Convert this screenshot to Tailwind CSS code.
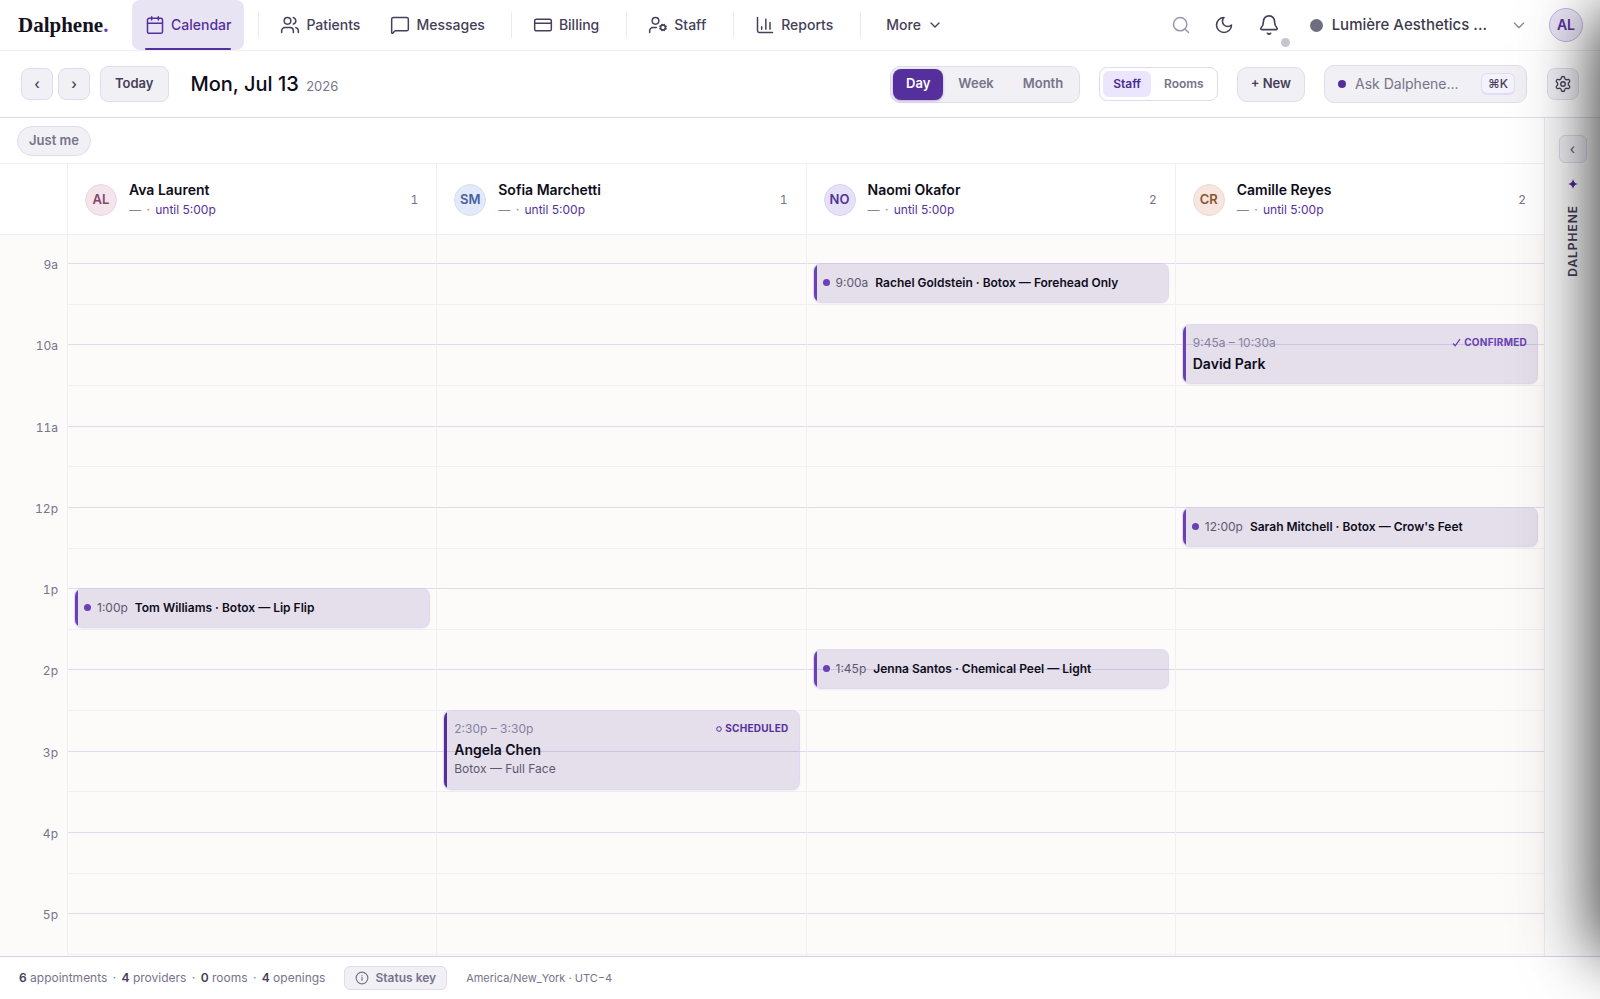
<!DOCTYPE html>
<html lang="en">
  <head>
    <meta charset="UTF-8" />
    <meta name="viewport" content="width=device-width, initial-scale=1.0" />
    <title>Dalphene - Calendar</title>
    <script src="https://cdn.jsdelivr.net/npm/@tailwindcss/browser@4"></script>
  </head>
  <body class="font-['Inter',sans-serif] text-[#0f0d1a] bg-white">
    <div class="relative h-screen flex flex-col overflow-hidden">
      <!-- Top nav -->
      <header class="flex items-center h-[51px] shrink-0 border-b border-[#f0f0f3] pl-[18px] pr-[17px] text-[#454058]">
        <a href="#" class="w-[114px] font-['Liberation_Serif',serif] font-bold text-[21px] leading-7 text-[#14121f]">Dalphene<span class="text-[#6b3fc0]">.</span></a>
        <nav class="flex items-center h-full text-sm font-medium">
          <a href="#" class="relative flex items-center gap-[6px] h-full px-[13px] rounded-lg bg-[#e9e4f3] text-[#552f9c]">
            <svg class="size-5" viewBox="0 0 24 24" fill="none" stroke="currentColor" stroke-width="1.8" stroke-linecap="round" stroke-linejoin="round"><path d="M8 2v4M16 2v4M3 10h18" /><rect x="3" y="4" width="18" height="18" rx="2" /></svg>
            Calendar
            <span class="absolute bottom-0 inset-x-[13px] h-[2px] rounded-full bg-[#552f9c]"></span>
          </a>
          <span class="w-px h-[26px] bg-[#ebebef] ml-[14px] mr-2"></span>
          <a href="#" class="flex items-center gap-[6px] h-full px-[13px]">
            <svg class="size-5" viewBox="0 0 24 24" fill="none" stroke="currentColor" stroke-width="1.8" stroke-linecap="round" stroke-linejoin="round"><path d="M16 21v-2a4 4 0 0 0-4-4H6a4 4 0 0 0-4 4v2" /><circle cx="9" cy="7" r="4" /><path d="M22 21v-2a4 4 0 0 0-3-3.87M16 3.13a4 4 0 0 1 0 7.75" /></svg>
            Patients
          </a>
          <a href="#" class="flex items-center gap-[6px] h-full px-[13px] ml-1">
            <svg class="size-5" viewBox="0 0 24 24" fill="none" stroke="currentColor" stroke-width="1.8" stroke-linecap="round" stroke-linejoin="round"><path d="M22 17a2 2 0 0 1-2 2H6.8a2 2 0 0 0-1.4.6l-2.2 2.2A.7.7 0 0 1 2 21.3V5a2 2 0 0 1 2-2h16a2 2 0 0 1 2 2z" /></svg>
            Messages
          </a>
          <span class="w-px h-[26px] bg-[#ebebef] ml-[13px] mr-2"></span>
          <a href="#" class="flex items-center gap-[6px] h-full px-[13px]">
            <svg class="size-5" viewBox="0 0 24 24" fill="none" stroke="currentColor" stroke-width="1.8" stroke-linecap="round" stroke-linejoin="round"><rect x="2" y="5" width="20" height="14" rx="2" /><path d="M2 10h20" /></svg>
            Billing
          </a>
          <span class="w-px h-[26px] bg-[#ebebef] ml-[14px] mr-2"></span>
          <a href="#" class="flex items-center gap-[6px] h-full px-[13px]">
            <svg class="size-5" viewBox="0 0 24 24" fill="none" stroke="currentColor" stroke-width="1.8" stroke-linecap="round" stroke-linejoin="round"><path d="M10 15H6a4 4 0 0 0-4 4v2" /><circle cx="9" cy="7" r="4" /><circle cx="18" cy="15" r="3" /><path d="m14.3 16.5.9-.4M20.8 13.9l.9-.3M16.6 11.3l.5.9M19.1 17.8l.3.9M21.7 16.4l-1-.4M15.2 13.9l-.9-.3M16.6 18.7l.3-.9M19.1 12.2l.3-.9" /></svg>
            Staff
          </a>
          <span class="w-px h-[26px] bg-[#ebebef] ml-[14px] mr-2"></span>
          <a href="#" class="flex items-center gap-[6px] h-full px-[13px]">
            <svg class="size-5" viewBox="0 0 24 24" fill="none" stroke="currentColor" stroke-width="1.8" stroke-linecap="round" stroke-linejoin="round"><path d="M3 3v16a2 2 0 0 0 2 2h16M8 17v-3M13 17V5M18 17V9" /></svg>
            Reports
          </a>
          <span class="w-px h-[26px] bg-[#ebebef] ml-[14px] mr-2"></span>
          <button class="flex items-center gap-[6px] h-full px-[17px]">
            More
            <svg class="size-4" viewBox="0 0 24 24" fill="none" stroke="currentColor" stroke-width="2" stroke-linecap="round" stroke-linejoin="round"><path d="m6 9 6 6 6-6" /></svg>
          </button>
        </nav>
        <div class="ml-auto flex items-center h-full">
          <button aria-label="Search" class="text-[#9a97ab]">
            <svg class="size-5" viewBox="0 0 24 24" fill="none" stroke="currentColor" stroke-width="1.8" stroke-linecap="round"><circle cx="11" cy="11" r="8" /><path d="m21 21-4.3-4.3" /></svg>
          </button>
          <button aria-label="Dark mode" class="ml-[23px]">
            <svg class="size-5" viewBox="0 0 24 24" fill="none" stroke="currentColor" stroke-width="1.9" stroke-linecap="round" stroke-linejoin="round"><path d="M12 3a6 6 0 0 0 9 9 9 9 0 1 1-9-9Z" /></svg>
          </button>
          <button aria-label="Notifications" class="relative ml-6">
            <svg class="size-[22px]" viewBox="0 0 24 24" fill="none" stroke="currentColor" stroke-width="1.8" stroke-linecap="round" stroke-linejoin="round"><path d="M10.3 21a2 2 0 0 0 3.4 0M3.3 15.3A1 1 0 0 0 4 17h16a1 1 0 0 0 .7-1.7C19.4 14 18 12.5 18 8A6 6 0 0 0 6 8c0 4.5-1.4 6-2.7 7.3" /></svg>
            <span class="absolute -right-[10px] -bottom-[11px] size-[9px] rounded-full bg-[#c7c5d0]"></span>
          </button>
          <button class="flex items-center ml-[30px] text-[15px] font-medium text-[#3d3b4c]">
            <span class="size-[13px] rounded-full bg-[#6e6e80] mr-[9px]"></span>
            <span>Lumière Aesthetics ...</span>
            <svg class="size-4 ml-6 text-[#8b899c]" viewBox="0 0 24 24" fill="none" stroke="currentColor" stroke-width="2" stroke-linecap="round" stroke-linejoin="round"><path d="m5 9 7 7 7-7" /></svg>
          </button>
          <button class="ml-[22px] size-[34px] rounded-full border border-[#c3b5e2] bg-[#e9e4f5] text-sm font-semibold text-[#552f9c]">AL</button>
        </div>
      </header>

      <!-- Toolbar -->
      <div class="flex items-center h-[67px] shrink-0 border-b border-[#dfdbf0] pl-[21px] pr-[21px] text-[13px] font-semibold text-[#454058]">
        <button aria-label="Previous day" class="size-8 rounded-lg border border-[#e0dcf0] bg-[#f1f0f5] text-sm font-medium">‹</button>
        <button aria-label="Next day" class="size-8 ml-[5px] rounded-lg border border-[#e0dcf0] bg-[#f1f0f5] text-sm font-medium">›</button>
        <button class="h-9 ml-[10px] px-[14px] rounded-lg border border-[#e0dcf0] bg-[#f1f0f5]">Today</button>
        <h1 class="ml-[22px] text-xl font-medium text-[#0f0d1a]">Mon, Jul 13 <span class="ml-[2px] text-[13px] font-normal text-[#77738a]">2026</span></h1>

        <div class="ml-auto flex gap-[2px] h-[37px] p-[2px] rounded-[10px] border border-[#e0dcf0] bg-[#f1f0f5] text-[#77738a]">
          <button class="px-[13px] rounded-lg bg-[#552f9c] text-white shadow-sm shadow-[#552f9c]/30">Day</button>
          <button class="px-[13px]">Week</button>
          <button class="px-[14px]">Month</button>
        </div>
        <div class="ml-[19px] flex gap-[3px] h-[34px] p-[3px] rounded-lg border border-[#e0dcf0] bg-white text-xs text-[#77738a]">
          <button class="px-[10px] rounded-md bg-[#ebe6fd] text-[#4c2a91]">Staff</button>
          <button class="px-[10px]">Rooms</button>
        </div>
        <button class="ml-[19px] h-[35px] px-[13px] rounded-[10px] border border-[#e0dcf0] bg-[#f1f0f5]">+ New</button>
        <label class="ml-[19px] flex items-center w-[203px] h-[38px] pl-[13px] pr-[11px] rounded-[10px] border border-[#e0dcf0] bg-[#f1f0f5]">
          <span class="size-2 shrink-0 rounded-full bg-[#552f9c]"></span>
          <input type="text" aria-label="Ask Dalphene" placeholder="Ask Dalphene..." class="ml-[9px] min-w-0 flex-1 text-sm font-normal outline-none placeholder:text-[#77738a]" />
          <kbd class="flex items-center justify-center w-[34px] h-[22px] rounded-md border border-b-2 border-[#e0dcf5] bg-[#f5f2fe] font-['Inter',sans-serif] text-xs font-medium">⌘K</kbd>
        </label>
        <button aria-label="Settings" class="ml-5 flex items-center justify-center size-8 rounded-lg border border-[#e0dcf0] bg-[#f1f0f5]">
          <svg class="size-[18px]" viewBox="0 0 24 24" fill="none" stroke="currentColor" stroke-width="1.8" stroke-linecap="round" stroke-linejoin="round"><path d="M9.67 4.14a2.34 2.34 0 0 1 4.66 0 2.34 2.34 0 0 0 3.32 1.91 2.34 2.34 0 0 1 2.33 4.03 2.34 2.34 0 0 0 0 3.84 2.34 2.34 0 0 1-2.33 4.03 2.34 2.34 0 0 0-3.32 1.91 2.34 2.34 0 0 1-4.66 0 2.34 2.34 0 0 0-3.32-1.91 2.34 2.34 0 0 1-2.33-4.03 2.34 2.34 0 0 0 0-3.84 2.34 2.34 0 0 1 2.33-4.03 2.34 2.34 0 0 0 3.32-1.91" /><circle cx="12" cy="12" r="3" /></svg>
        </button>
      </div>

      <div class="flex flex-1 min-h-0">
        <main class="flex flex-col flex-1 min-w-0">
          <div class="flex items-center h-[46px] shrink-0 border-b border-[#f0f0f3] px-[17px]">
            <button class="h-[30px] px-[11px] rounded-full border border-[#e0dcf0] bg-[#f1f0f5] text-[13px] font-semibold text-[#77738a]">Just me</button>
          </div>

          <!-- Provider heads -->
          <div class="flex h-[71px] shrink-0 border-b border-[#f0f0f3]">
            <div class="w-[67px] shrink-0"></div>
            <div id="providers" class="grid grid-cols-4 flex-1"></div>
          </div>

          <div class="flex flex-1 min-h-0 bg-[#fcfbfa]">
            <div class="w-[67px] shrink-0 flex flex-col pt-[28px] pb-[2px]">
              <div id="hours" class="relative flex-1 text-xs tabular-nums text-[#77738a]"></div>
            </div>
            <div class="relative flex-1">
              <div id="lines" class="absolute inset-x-0 top-[28px] bottom-[2px]"></div>
              <div id="columns" class="absolute inset-0 grid grid-cols-4"></div>
            </div>
          </div>
        </main>

        <!-- Assistant rail -->
        <aside class="w-14 shrink-0 flex flex-col items-center border-l border-[#ebebef] bg-[#fafafb] pt-[17px]">
          <button aria-label="Open Dalphene" class="size-7 rounded-md border border-[#dcd9e8] bg-[#f1f0f5] text-sm leading-4 text-[#5c586e]">‹</button>
          <svg class="size-3 mt-[15px]" viewBox="0 0 12 12" fill="#4c2a91"><path d="M6 1C6.6 4 8 5.4 11 6 8 6.6 6.6 8 6 11 5.4 8 4 6.6 1 6 4 5.4 5.4 4 6 1Z" /></svg>
          <span class="mt-[15px] [writing-mode:vertical-rl] rotate-180 text-xs font-semibold tracking-[0.08em] text-[#454058]">DALPHENE</span>
        </aside>
      </div>

      <!-- Status bar -->
      <footer class="flex items-center h-[43px] shrink-0 border-t border-[#d5cfea] pl-[19px] text-xs text-[#77738a]">
        <p>
          <b class="font-semibold text-[#454058]">6</b> appointments <span class="mx-[2px]">·</span>
          <b class="font-semibold text-[#454058]">4</b> providers <span class="mx-[2px]">·</span>
          <b class="font-semibold text-[#454058]">0</b> rooms <span class="mx-[2px]">·</span>
          <b class="font-semibold text-[#454058]">4</b> openings
        </p>
        <button class="ml-[19px] flex items-center gap-[6px] h-6 px-[10px] rounded-md border border-[#e0dcf0] bg-[#f1f0f5] font-semibold">
          <svg class="size-[14px]" viewBox="0 0 24 24" fill="none" stroke="currentColor" stroke-width="2" stroke-linecap="round"><circle cx="12" cy="12" r="10" /><path d="M12 16v-5M12 8v.01" /></svg>
          Status key
        </button>
        <span class="ml-[19px] text-[11px]">America/New_York · UTC−4</span>
      </footer>

      <!-- Closed drawer, its shadow falls over the right edge -->
      <div class="absolute left-full top-4 bottom-12 w-80 pointer-events-none shadow-[0_0_80px_rgb(0_0_0/0.4),0_0_56px_rgb(0_0_0/0.6)]"></div>
    </div>

    <script>
      const DAY_START = 9;
      const DAY_HOURS = 8.5;
      const pct = (hours) => (hours / DAY_HOURS) * 100 + "%";

      const providers = [
        { initials: "AL", name: "Ava Laurent", color: "bg-[#f4e4ec] border-[#ead8e3] text-[#86466a]" },
        { initials: "SM", name: "Sofia Marchetti", color: "bg-[#e3e9f8] border-[#d8dff0] text-[#44609f]" },
        { initials: "NO", name: "Naomi Okafor", color: "bg-[#e7e1f8] border-[#dad3f0] text-[#50349a]" },
        { initials: "CR", name: "Camille Reyes", color: "bg-[#f6e6df] border-[#ebdad3] text-[#8a5430]" },
      ];

      const events = [
        { col: 0, start: 13, end: 13.5, time: "1:00p", title: "Tom Williams · Botox — Lip Flip" },
        { col: 1, start: 14.5, end: 15.5, time: "2:30p – 3:30p", title: "Angela Chen", note: "Botox — Full Face", status: "SCHEDULED" },
        { col: 2, start: 9, end: 9.5, time: "9:00a", title: "Rachel Goldstein · Botox — Forehead Only" },
        { col: 2, start: 13.75, end: 14.25, time: "1:45p", title: "Jenna Santos · Chemical Peel — Light" },
        { col: 3, start: 9.75, end: 10.5, time: "9:45a – 10:30a", title: "David Park", status: "CONFIRMED" },
        { col: 3, start: 12, end: 12.5, time: "12:00p", title: "Sarah Mitchell · Botox — Crow's Feet" },
      ];

      const statusIcons = {
        SCHEDULED: '<svg class="size-[6px]" viewBox="0 0 6 6" fill="none" stroke="currentColor"><circle cx="3" cy="3" r="2.3" /></svg>',
        CONFIRMED: '<svg class="size-[9px]" viewBox="0 0 9 9" fill="none" stroke="currentColor" stroke-width="1.3"><path d="M1 5.5 3.2 7.8 8 1.2" /></svg>',
      };

      function eventBody(e) {
        if (!e.status) {
          return `
            <div class="flex items-center h-full pl-[9px] text-xs">
              <span class="size-[7px] rounded-full bg-[#6b3fb5] mr-[6px]"></span>
              <span class="text-[#5c586e] mr-[7px]">${e.time}</span>
              <span class="font-semibold">${e.title}</span>
            </div>`;
        }
        return `
          <div class="px-[10px] pt-[10px]">
            <div class="flex items-center justify-between text-xs text-[#8682a0]">
              <span>${e.time}</span>
              <span class="flex items-center gap-[3px] text-[10px] font-bold tracking-wide ${e.status === "SCHEDULED" ? "text-[#552f9c]" : "text-[#6b3fb5]"}">${statusIcons[e.status]}${e.status}</span>
            </div>
            <div class="mt-[3px] text-sm font-semibold">${e.title}</div>
            ${e.note ? `<div class="mt-px text-xs text-[#5c586e]">${e.note}</div>` : ""}
          </div>`;
      }

      document.getElementById("providers").innerHTML = providers
        .map((p, i) => `
          <div class="flex items-center border-l border-[#f0f0f3] pl-[17px] pr-[18px] pt-[2px]">
            <span class="flex items-center justify-center size-8 rounded-full border text-[13px] font-semibold ${p.color}">${p.initials}</span>
            <div class="ml-3">
              <div class="text-sm font-semibold">${p.name}</div>
              <div class="text-xs leading-5 text-[#8682a0]">— <span class="mx-[2px]">·</span> <span class="text-[#552f9c]">until 5:00p</span></div>
            </div>
            <span class="ml-auto text-xs tabular-nums text-[#77738a]">${events.filter((e) => e.col === i).length}</span>
          </div>`)
        .join("");

      document.getElementById("columns").innerHTML = providers
        .map((p, i) => `
          <div class="relative border-l border-[#f0f0f3]">
            <div class="absolute left-[6px] right-[6px] top-[28px] bottom-[2px]">
              ${events
                .filter((e) => e.col === i)
                .map((e) => `
                  <div class="absolute inset-x-0 pb-px" style="top: ${pct(e.start - DAY_START)}; height: ${pct(e.end - e.start)}">
                    <article class="relative h-full overflow-hidden rounded-lg border border-[#d9d4f0]/60 bg-[#4c2a91]/13 shadow-xs">
                      <span class="absolute left-0 inset-y-0 w-[3px] ${e.status === "SCHEDULED" ? "bg-[#552f9c]" : "bg-[#6b3fb5]"}"></span>
                      ${eventBody(e)}
                    </article>
                  </div>`)
                .join("")}
            </div>
          </div>`)
        .join("");

      let lines = "";
      let hours = "";
      for (let h = 0; h <= DAY_HOURS; h += 0.5) {
        const full = Number.isInteger(h);
        lines += `<div class="absolute inset-x-0 h-px ${full ? "bg-[#dfdbee]" : "bg-[#f0f0f2]"}" style="top: ${pct(h)}"></div>`;
        if (full) {
          const hour = DAY_START + h;
          const label = (hour > 12 ? hour - 12 : hour) + (hour < 12 ? "a" : "p");
          hours += `<div class="absolute right-[9px] -mt-[6px]" style="top: ${pct(h)}">${label}</div>`;
        }
      }
      document.getElementById("lines").innerHTML = lines;
      document.getElementById("hours").innerHTML = hours;
    </script>
  </body>
</html>
